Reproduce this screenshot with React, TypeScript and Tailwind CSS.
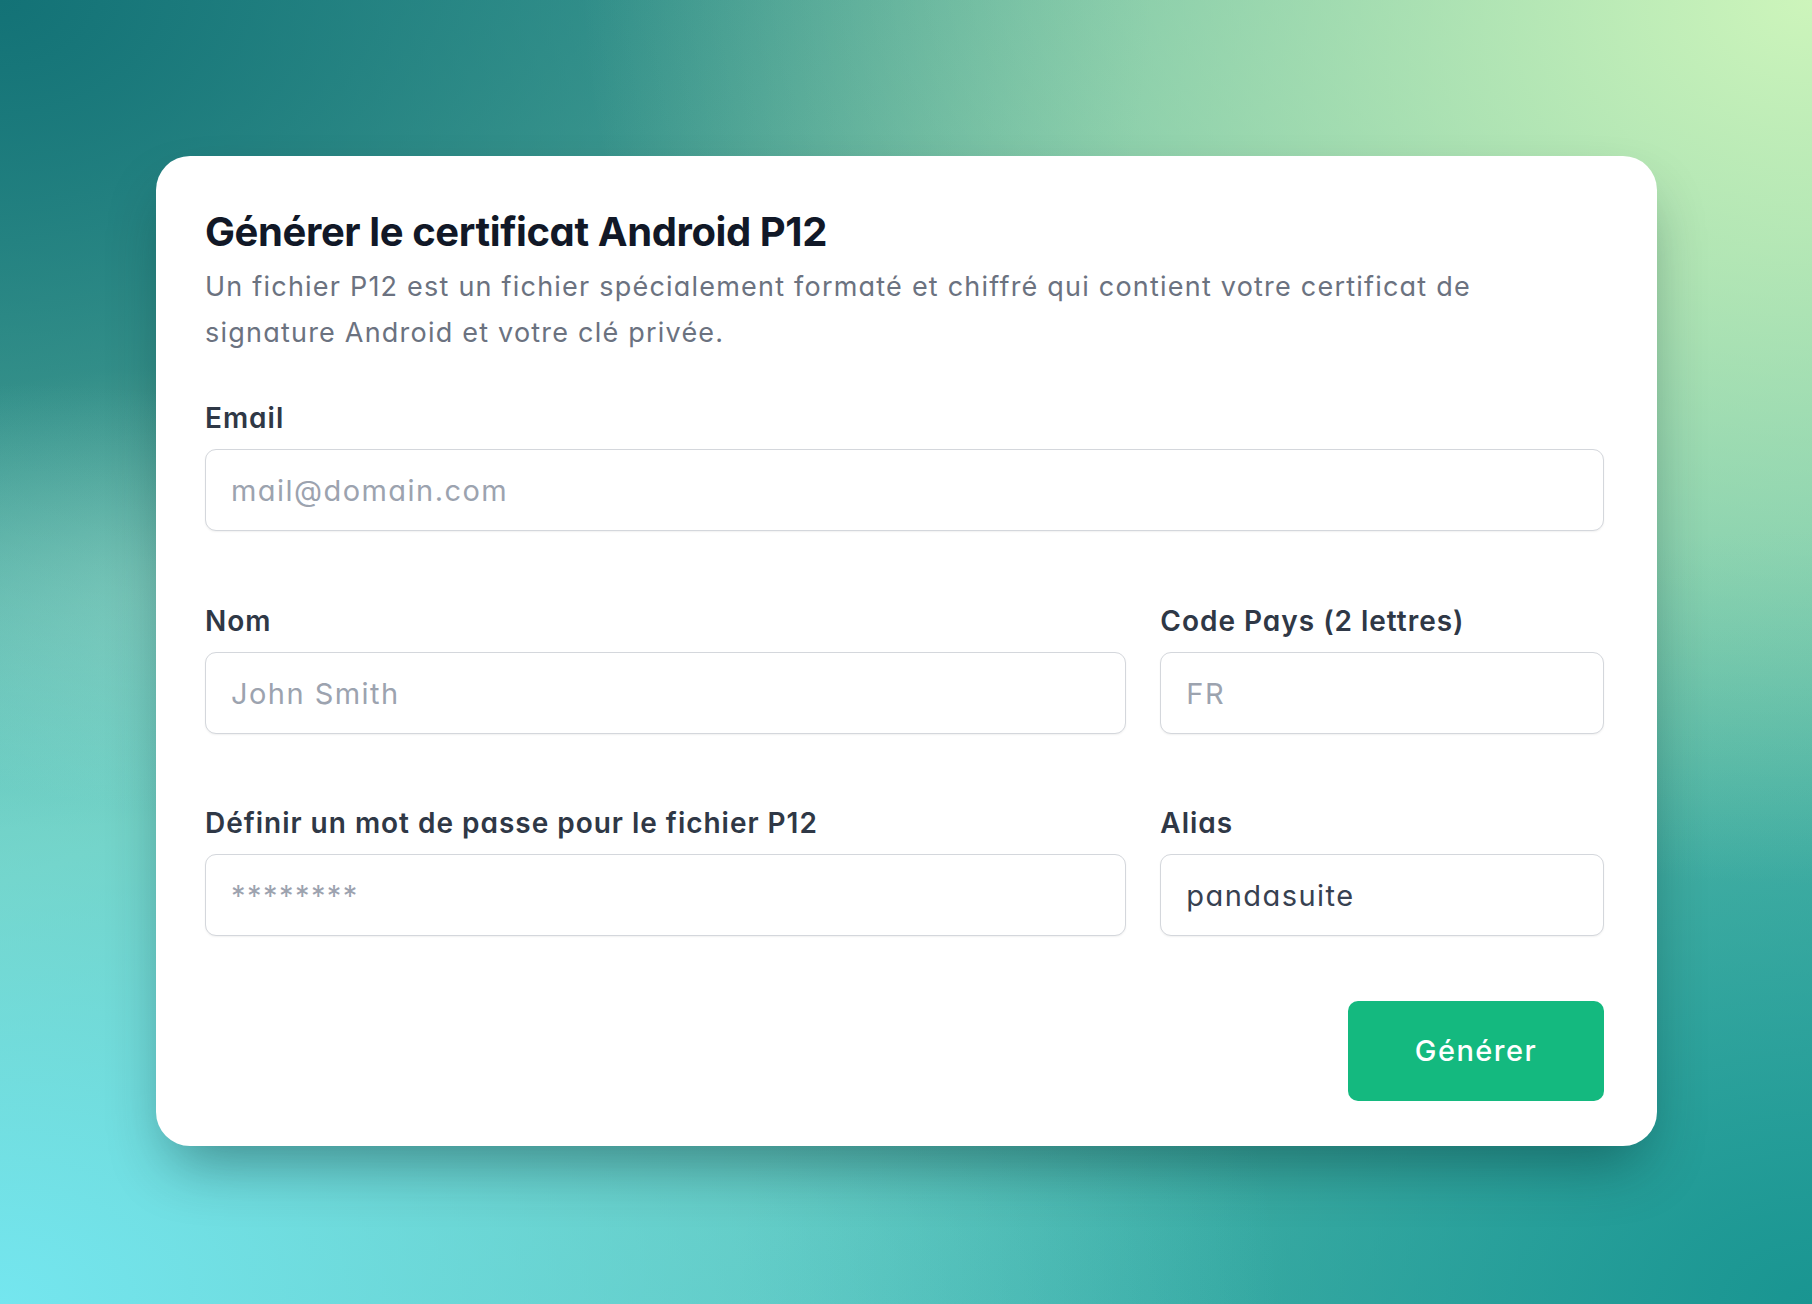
import React from 'react';

const bg =
  "bg-[image:radial-gradient(ellipse_at_100%_0%,#cdf5bb_0%,#cdf5bb00_48%),radial-gradient(ellipse_at_0%_100%,#74e6ef_0%,#74e6ef00_50%),radial-gradient(ellipse_at_100%_100%,#199591_0%,#19959100_42%),radial-gradient(ellipse_at_0%_0%,#137276_0%,#13727600_45%),radial-gradient(ellipse_at_12%_45%,#a6ddc0_0%,#a6ddc000_22%),linear-gradient(160deg,#3f9f98_0%,#74c3a6_45%,#45b7b3_100%)]";

const inputCls =
  "w-full h-[82px] rounded-[11px] border border-[#d4d7dc] bg-white px-[25px] text-[29px] tracking-[0.05em] text-[#374151] shadow-[0_1px_2px_rgba(0,0,0,0.06)] outline-none placeholder:text-[#9ca3af]";

const labelCls = "block text-[28px] leading-[36px] tracking-[0.035em] font-semibold text-[#2f3846]";

const Field: React.FC<{ label: string; placeholder?: string; value?: string; type?: string; className?: string }> = ({
  label,
  placeholder,
  value,
  type = 'text',
  className = '',
}) => (
  <div className={className}>
    <label className={labelCls}>{label}</label>
    <input
      type={type}
      placeholder={placeholder}
      defaultValue={value}
      className={`${inputCls} mt-[13px]`}
    />
  </div>
);

const App: React.FC = () => {
  return (
    <div
      className={`w-full h-[1304px] overflow-hidden ${bg} pt-[156px] pl-[156px] font-['Inter','Noto_Sans',sans-serif] [font-feature-settings:'cv11']`}
    >
      <div className="w-[1501px] h-[990px] bg-white rounded-[34px] pl-[49px] pr-[53px] pt-[52px] shadow-[0_30px_60px_-15px_rgba(0,40,40,0.45)] flex flex-col">
        <h1 className="text-[40px] leading-[48px] font-bold text-[#111827] tracking-[-0.01em]">
          Générer le certificat Android P12
        </h1>
        <p className="mt-[8px] text-[27px] leading-[46px] tracking-[0.045em] text-[#6b7280] pr-[100px]">
          Un fichier P12 est un fichier spécialement formaté et chiffré qui contient votre certificat de signature
          Android et votre clé privée.
        </p>

        <Field label="Email" placeholder="mail@domain.com" className="mt-[44px]" />

        <div className="grid grid-cols-3 gap-x-[34px] mt-[72px]">
          <Field label="Nom" placeholder="John Smith" className="col-span-2" />
          <Field label="Code Pays (2 lettres)" placeholder="FR" />
        </div>

        <div className="grid grid-cols-3 gap-x-[34px] mt-[71px]">
          <Field label="Définir un mot de passe pour le fichier P12" placeholder="********" className="col-span-2" />
          <Field label="Alias" value="pandasuite" />
        </div>

        <div className="flex justify-end mt-[65px]">
          <button className="w-[256px] h-[100px] rounded-[10px] bg-[#14b97f] text-white text-[29px] tracking-[0.05em] font-medium">
            Générer
          </button>
        </div>
      </div>
    </div>
  );
};

export default App;
